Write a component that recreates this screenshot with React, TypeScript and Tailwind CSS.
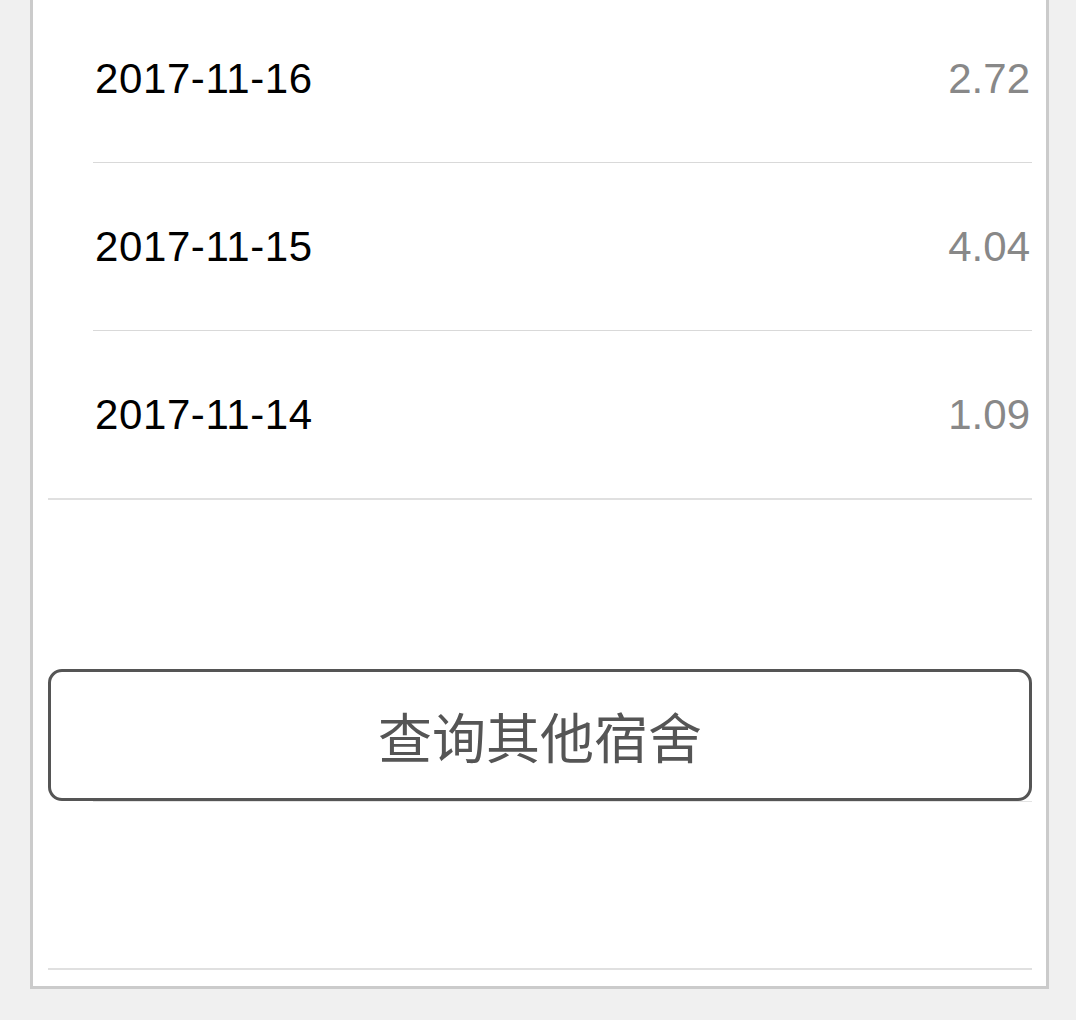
const records = [
  { date: "2017-11-16", value: "2.72" },
  { date: "2017-11-15", value: "4.04" },
  { date: "2017-11-14", value: "1.09" },
];

export default function App() {
  return (
    <div className="min-h-[1020px] overflow-hidden bg-[#f0f0f0] pl-[30px] pr-[27px] font-['Liberation_Sans','Noto_Sans_CJK_SC',sans-serif]">
      <div className="-mt-[5px] border-x-[3px] border-b-[3px] border-[#cbcbcb] bg-white pl-[15px] pr-[14px] pb-[16px]">
        {records.map((r, i) => (
          <div key={r.date}>
            <div className="flex h-[167px] items-center justify-between pl-[47px] pr-[2px] text-[42px]">
              <span className="tracking-[0.6px] text-black">{r.date}</span>
              <span className="text-[#888888]">{r.value}</span>
            </div>
            {i < records.length - 1 ? (
              <div className="ml-[45px] h-px bg-[#d9d9d9]" />
            ) : (
              <div className="h-[2px] bg-[#e0e0e0]" />
            )}
          </div>
        ))}

        <div className="h-[169px]" />
        <button className="flex h-[132px] w-full items-center justify-center rounded-[14px] border-[3px] border-[#555555] bg-white text-[54px] text-[#555555] font-['Noto_Sans_CJK_SC',sans-serif]">
          查询其他宿舍
        </button>
        <div className="ml-[45px] h-px bg-[#e3e3e3]" />
        <div className="h-[166px]" />
        <div className="h-[2px] bg-[#e0e0e0]" />
      </div>
    </div>
  );
}
